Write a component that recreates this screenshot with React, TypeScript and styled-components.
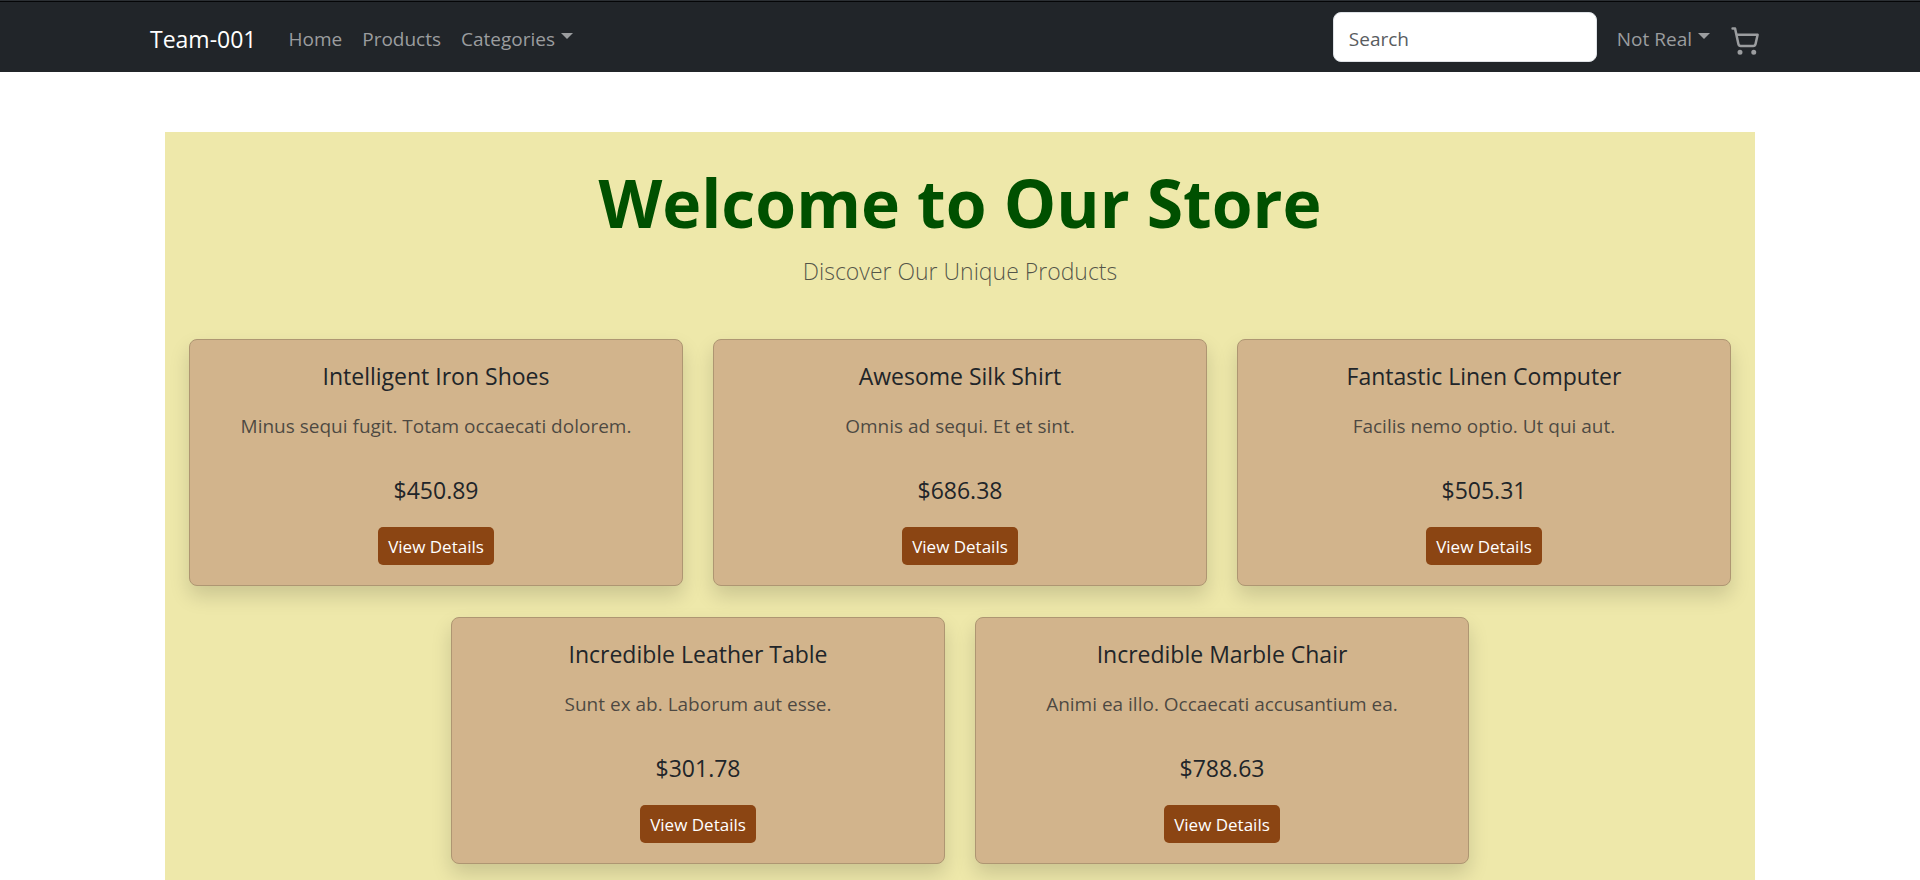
import React from 'react';
import styled, { createGlobalStyle } from 'styled-components';
import { ShoppingCart } from 'lucide-react';

const GlobalStyle = createGlobalStyle`
  *, *::before, *::after { box-sizing: border-box; }
  body {
    margin: 0;
    background: #fff;
    color: #212529;
    font-family: 'Segoe UI', 'Open Sans', 'Noto Sans', sans-serif;
    font-size: 19px;
    line-height: 30px;
  }
`;

const Navbar = styled.header`
  background: #212529;
  border-top: 1px solid #2b2f33;
  box-shadow: inset 0 1px 0 #050607;
  padding: 11px 0 10px;
`;

const NavContainer = styled.div`
  display: flex;
  align-items: center;
  max-width: 1650px;
  margin: 0 auto;
  padding: 0 15px;
`;

const Brand = styled.a`
  margin-right: 22px;
  padding: 12px 0 8px;
  color: #fff;
  font-size: 23px;
  text-decoration: none;
`;

const NavList = styled.nav`
  display: flex;
  align-items: center;
  flex: 1;
`;

const NavLink = styled.a`
  padding: 12px 10px 8px;
  color: #9b9d9f;
  text-decoration: none;
`;

const NavToggle = styled.button`
  display: flex;
  align-items: center;
  gap: 6px;
  padding: 12px 10px 8px;
  border: 0;
  background: none;
  color: #9b9d9f;
  font: inherit;
  cursor: pointer;

  &::after {
    content: '';
    margin-bottom: 6px;
    border: 6px solid transparent;
    border-top-color: currentColor;
    border-bottom: 0;
  }
`;

const SearchForm = styled.form`
  margin-right: 10px;
`;

const SearchInput = styled.input`
  display: block;
  width: 264px;
  height: 50px;
  padding: 10px 15px 7px;
  border: 1px solid #dee2e6;
  border-radius: 8px;
  background: #fff;
  color: #212529;
  font: inherit;

  &::placeholder { color: #595c5f; opacity: 1; }
`;

const CartLink = styled(NavLink)`
  display: flex;
  padding: 8px 10px 0;
`;

const Hero = styled.main`
  max-width: 1590px;
  margin: 60px auto 0;
  padding: 24px 24px 16px;
  background: #eee8aa;
  text-align: center;
`;

const HeroTitle = styled.h1`
  margin: 0 0 5px;
  color: #005000;
  font-size: 66px;
  font-weight: 700;
  line-height: 92px;
`;

const HeroLead = styled.p`
  margin: 0 0 50px;
  color: rgba(33, 37, 41, 0.75);
  font-size: 23px;
  font-weight: 300;
  line-height: 36px;
`;

const ProductGrid = styled.section`
  display: flex;
  flex-wrap: wrap;
  justify-content: center;
  gap: 31px 30px;
`;

const Card = styled.article`
  display: flex;
  flex-direction: column;
  align-items: center;
  width: calc((100% - 60px) / 3);
  min-width: 320px;
  padding: 21px 20px 20px;
  border: 1px solid #ae9672;
  border-radius: 8px;
  background: #d2b48c;
  box-shadow: 0 10px 20px rgba(0, 0, 0, 0.15);
`;

const CardTitle = styled.h2`
  margin: 0 0 20px;
  font-size: 23px;
  font-weight: 400;
  line-height: 30px;
`;

const CardText = styled.p`
  margin: 0 0 34px;
  color: rgba(33, 37, 41, 0.75);
`;

const Price = styled.p`
  margin: 0 0 22px;
  font-size: 23px;
`;

const DetailsButton = styled.button`
  height: 38px;
  padding: 2px 10px 0;
  border: 0;
  border-radius: 5px;
  background: #8b4513;
  color: #fff;
  font: inherit;
  font-size: 17px;
  cursor: pointer;
`;

const products = [
  { name: 'Intelligent Iron Shoes', text: 'Minus sequi fugit. Totam occaecati dolorem.', price: '$450.89' },
  { name: 'Awesome Silk Shirt', text: 'Omnis ad sequi. Et et sint.', price: '$686.38' },
  { name: 'Fantastic Linen Computer', text: 'Facilis nemo optio. Ut qui aut.', price: '$505.31' },
  { name: 'Incredible Leather Table', text: 'Sunt ex ab. Laborum aut esse.', price: '$301.78' },
  { name: 'Incredible Marble Chair', text: 'Animi ea illo. Occaecati accusantium ea.', price: '$788.63' },
];

export default function App() {
  return (
    <>
      <GlobalStyle />
      <Navbar>
        <NavContainer>
          <Brand href="#">Team-001</Brand>
          <NavList>
            <NavLink href="#">Home</NavLink>
            <NavLink href="#">Products</NavLink>
            <NavToggle type="button">Categories</NavToggle>
          </NavList>
          <SearchForm role="search">
            <SearchInput type="search" placeholder="Search" aria-label="Search" />
          </SearchForm>
          <NavToggle type="button">Not Real</NavToggle>
          <CartLink href="#" aria-label="Cart">
            <ShoppingCart size={30} />
          </CartLink>
        </NavContainer>
      </Navbar>
      <Hero>
        <HeroTitle>Welcome to Our Store</HeroTitle>
        <HeroLead>Discover Our Unique Products</HeroLead>
        <ProductGrid>
          {products.map((product) => (
            <Card key={product.name}>
              <CardTitle>{product.name}</CardTitle>
              <CardText>{product.text}</CardText>
              <Price>{product.price}</Price>
              <DetailsButton type="button">View Details</DetailsButton>
            </Card>
          ))}
        </ProductGrid>
      </Hero>
    </>
  );
}
